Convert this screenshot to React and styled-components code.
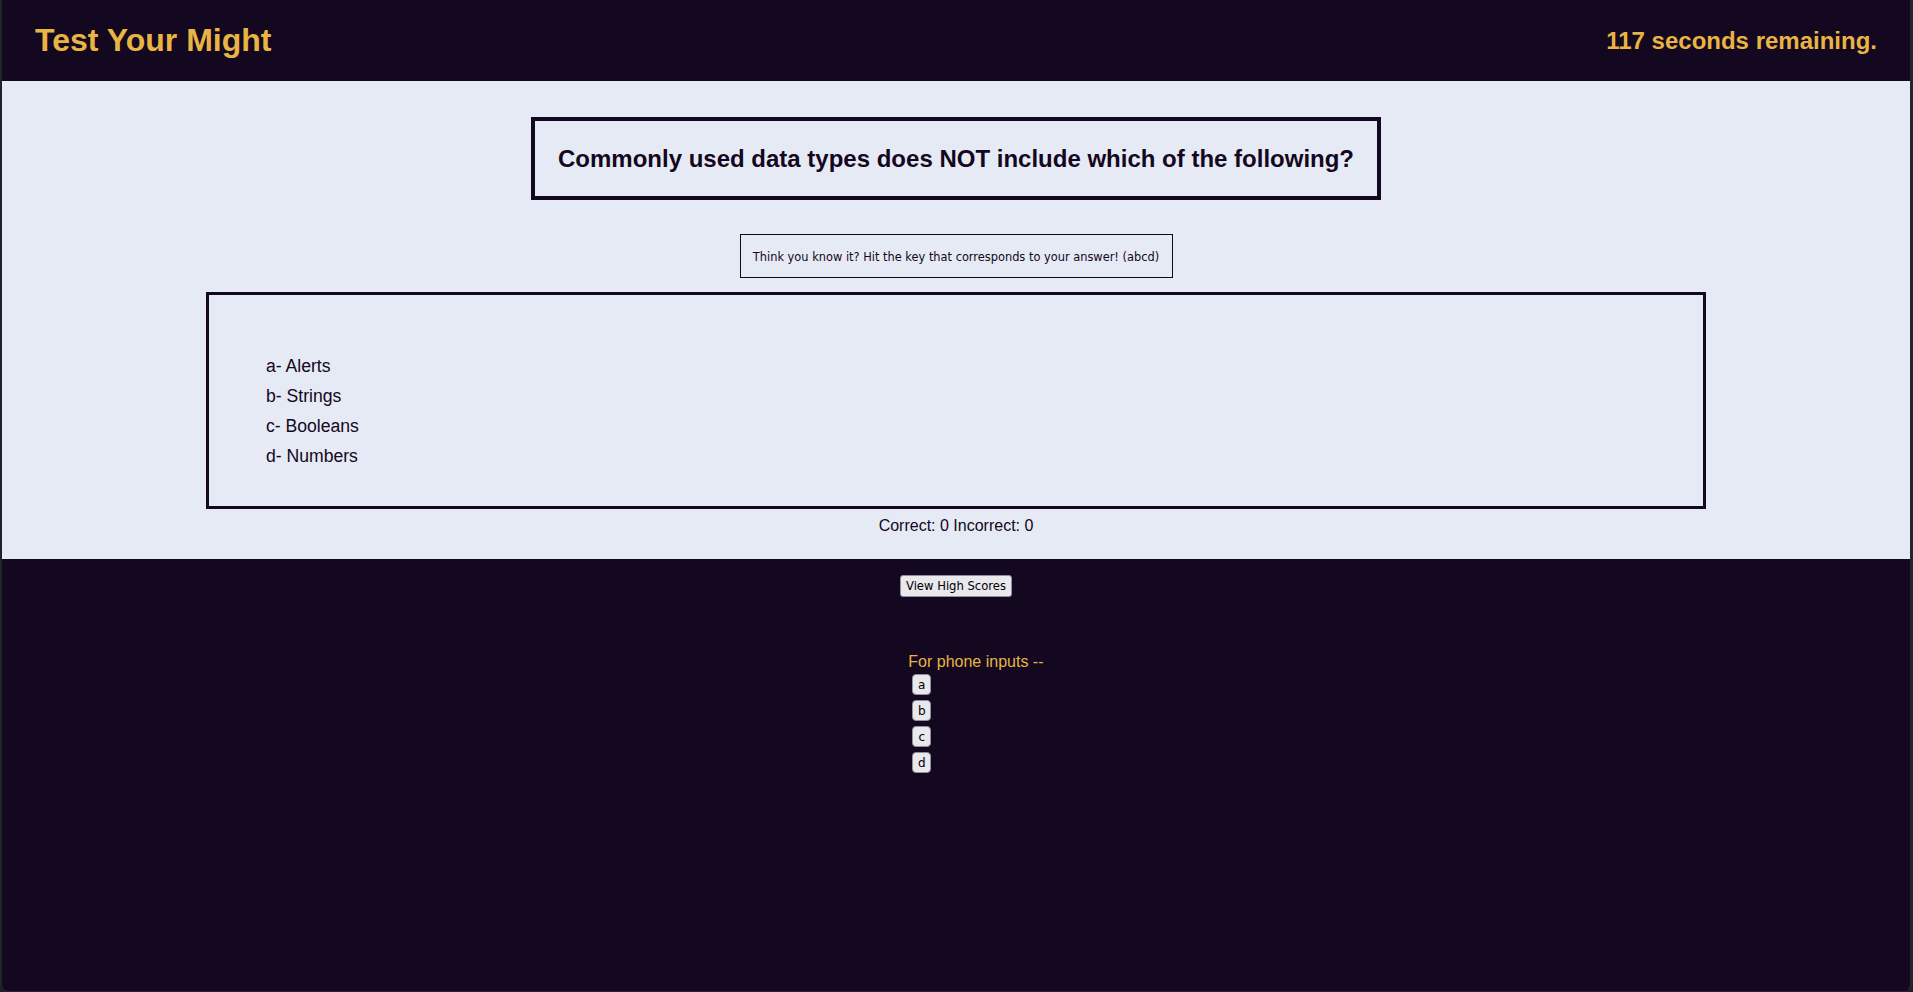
import React from "react";
import styled, { createGlobalStyle } from "styled-components";

const GlobalStyle = createGlobalStyle`
  html, body {
    margin: 0;
    padding: 0;
    background: #1a2222;
  }
  body {
    font-family: "Liberation Sans", Arial, sans-serif;
  }
`;

const Page = styled.div`
  min-height: 100vh;
  box-sizing: border-box;
  background-color: #140720;
  border-left: 2px solid #1c2626;
  border-right: 3px solid #26242c;
  border-bottom: 1px solid #3a1a40;
  border-radius: 0 0 8px 8px;
  display: flex;
  flex-direction: column;
`;

const Header = styled.header`
  height: 81px;
  display: flex;
  justify-content: space-between;
  align-items: center;
  padding: 0 33px;
  color: #e8b444;
  font-weight: bold;
`;

const Title = styled.h1`
  margin: 0;
  font-size: 32px;
`;

const Timer = styled.div`
  font-size: 24px;
  margin-top: 1px;
`;

const Main = styled.main`
  height: 478px;
  background-color: #e6eaf5;
  display: flex;
  flex-direction: column;
  align-items: center;
  color: #140720;
`;

const Question = styled.h2`
  box-sizing: border-box;
  width: 850px;
  height: 83px;
  margin: 36px 0 0;
  border: 4px solid #140720;
  display: flex;
  align-items: center;
  justify-content: center;
  font-size: 24px;
  font-weight: bold;
`;

const Hint = styled.div`
  box-sizing: border-box;
  width: 433px;
  height: 44px;
  margin-top: 34px;
  padding-top: 1px;
  border: 1px solid #140720;
  display: flex;
  align-items: center;
  justify-content: center;
  font-family: "DejaVu Sans", Verdana, sans-serif;
  font-size: 11.4px;
`;

const Answers = styled.ul`
  box-sizing: border-box;
  width: 1500px;
  height: 217px;
  margin: 14px 0 0;
  padding: 56px 0 0 57px;
  border: 3px solid #140720;
  list-style: none;
`;

const Answer = styled.li`
  font-size: 17.6px;
  line-height: 30px;
`;

const Score = styled.p`
  margin: 8px 0 0;
  font-size: 16px;
  line-height: 18px;
`;

const Footer = styled.section`
  display: flex;
  flex-direction: column;
  align-items: center;
  padding-top: 16px;
`;

const Button = styled.button`
  font-family: "DejaVu Sans", Verdana, sans-serif;
  font-size: ${(props) => (props.small ? "12px" : "11.6px")};
  color: #000;
  background: #e9e9ed;
  border: 1px solid #8f8f9d;
  border-radius: 3px;
  height: ${(props) => (props.small ? "21px" : "22px")};
  padding: 0 5px;
  cursor: pointer;
`;

const Phone = styled.div`
  align-self: flex-start;
  margin: 56px 0 0 47.5%;
  display: flex;
  flex-direction: column;
  align-items: flex-start;
  gap: 5px;
`;

const PhoneLabel = styled.div`
  color: #e8b444;
  font-size: 16px;
  line-height: 18px;
  margin-bottom: -2px;
`;

const KeyButton = styled(Button)`
  margin-left: 4px;
  width: 19px;
  padding: 0;
  border-radius: 4px;
`;

const answers = [
  ["a", "Alerts"],
  ["b", "Strings"],
  ["c", "Booleans"],
  ["d", "Numbers"],
];

function App() {
  return (
    <>
      <GlobalStyle />
      <Page>
        <Header>
          <Title>Test Your Might</Title>
          <Timer>117 seconds remaining.</Timer>
        </Header>
        <Main>
          <Question>Commonly used data types does NOT include which of the following?</Question>
          <Hint>Think you know it? Hit the key that corresponds to your answer! (abcd)</Hint>
          <Answers>
            {answers.map(([key, label]) => (
              <Answer key={key}>
                {key}- {label}
              </Answer>
            ))}
          </Answers>
          <Score>Correct: 0 Incorrect: 0</Score>
        </Main>
        <Footer>
          <Button>View High Scores</Button>
          <Phone>
            <PhoneLabel>For phone inputs --</PhoneLabel>
            {answers.map(([key]) => (
              <KeyButton small key={key}>
                {key}
              </KeyButton>
            ))}
          </Phone>
        </Footer>
      </Page>
    </>
  );
}

export default App;
